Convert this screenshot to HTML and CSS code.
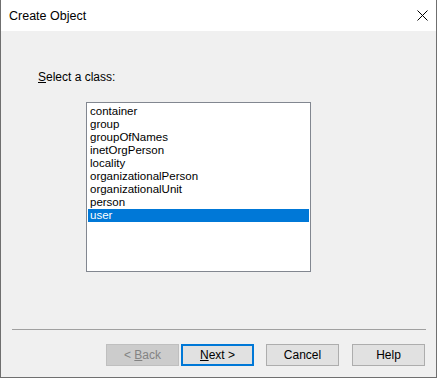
FILE: index.html
```html
<!DOCTYPE html>
<html>
<head>
<meta charset="utf-8">
<link rel="stylesheet" href="styles.css">
</head>
<body>
<div class="window">
  <div class="titlebar">
    <span class="title">Create Object</span>
    <svg class="close" width="11" height="11" viewBox="0 0 11 11"><path d="M0.5 0.5 L10.5 10.5 M10.5 0.5 L0.5 10.5" stroke="#000" stroke-width="1" fill="none"/></svg>
  </div>
  <div class="content">
    <div class="label"><u>S</u>elect a class:</div>
    <div class="listbox">
      <div class="item">container</div>
      <div class="item">group</div>
      <div class="item">groupOfNames</div>
      <div class="item">inetOrgPerson</div>
      <div class="item">locality</div>
      <div class="item">organizationalPerson</div>
      <div class="item">organizationalUnit</div>
      <div class="item">person</div>
      <div class="item selected">user</div>
    </div>
  </div>
  <div class="separator"></div>
  <div class="buttons">
    <div class="btn disabled"><span>&lt;&nbsp;<u>B</u>ack</span></div>
    <div class="btn default"><span><u>N</u>ext&nbsp;&gt;</span></div>
    <div class="btn cancel"><span>Cancel</span></div>
    <div class="btn help"><span>Help</span></div>
  </div>
</div>
</body>
</html>
```
FILE: styles.css
```css
html, body {
  margin: 0;
  padding: 0;
}
body {
  width: 437px;
  height: 378px;
  overflow: hidden;
  font-family: "Liberation Sans", Arial, sans-serif;
  font-size: 12px;
  color: #000;
}
.window {
  width: 437px;
  height: 378px;
  box-sizing: border-box;
  border: 1px solid #6f6f6f;
  border-top: none;
  background: #f0f0f0;
  display: flex;
  flex-direction: column;
}
.titlebar {
  height: 31px;
  background: #fff;
  display: flex;
  align-items: center;
  padding-left: 8px;
  padding-right: 9px;
  justify-content: space-between;
}
.title {
  line-height: 16px;
  margin-top: 1px;
  font-size: 12.5px;
}
.close {
  display: block;
  margin-right: -1px;
}
.content {
  padding-left: 37px;
}
.label {
  margin-top: 38px;
  line-height: 16px;
}
.listbox {
  margin-top: 17px;
  margin-left: 48px;
  width: 225px;
  height: 170px;
  box-sizing: border-box;
  border: 1px solid #828790;
  background: #fff;
  padding: 2px 1px 0 1px;
}
.item {
  height: 13px;
  line-height: 13px;
  font-size: 11.5px;
  padding-left: 2px;
  white-space: nowrap;
}
.item.selected {
  background: #0078d7;
  color: #fff;
}
.separator {
  margin-top: 57px;
  margin-left: 11px;
  margin-right: 10px;
  height: 1px;
  background: #a0a0a0;
}
.buttons {
  margin-top: 14px;
  display: flex;
  justify-content: flex-end;
  padding-right: 11px;
}
.btn {
  width: 73px;
  height: 22px;
  box-sizing: border-box;
  border: 1px solid #adadad;
  background: #e1e1e1;
  display: flex;
  align-items: center;
  justify-content: center;
  line-height: 16px;
}
.btn.disabled {
  background: #cccccc;
  border-color: #bfbfbf;
  color: #838383;
}
.btn.default {
  margin-left: 2px;
  border: 2px solid #0078d7;
}
.btn.cancel {
  margin-left: 12px;
}
.btn.help {
  margin-left: 13px;
}
```
